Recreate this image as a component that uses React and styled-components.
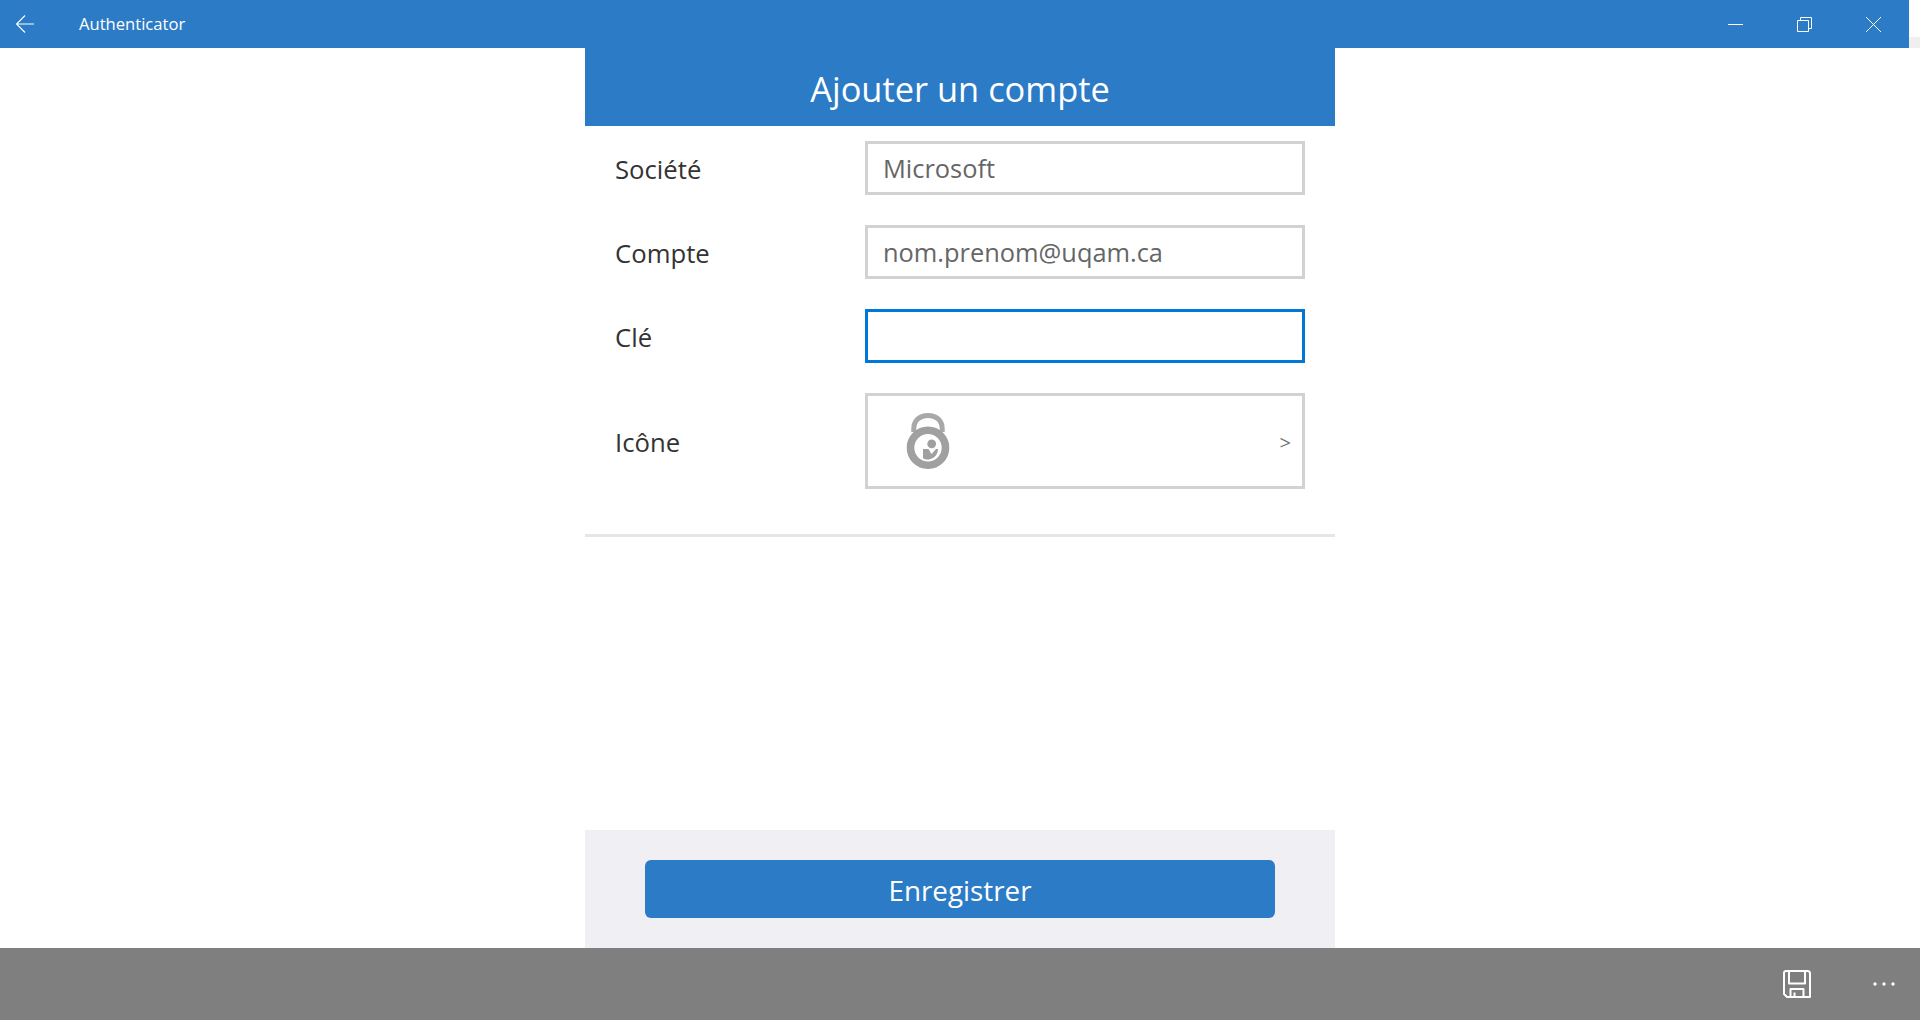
import React from "react";
import styled, { createGlobalStyle } from "styled-components";

const Global = createGlobalStyle`
  html, body { margin: 0; padding: 0; background: #fff; }
  * { box-sizing: border-box; }
  body { font-family: "Open Sans", "Noto Sans", "Liberation Sans", sans-serif; }
`;

const Page = styled.div`
  width: 1920px;
  height: 1020px;
  display: flex;
  flex-direction: column;
  overflow: hidden;
  background: #fff;
`;

const TitleRow = styled.div`
  height: 48px;
  display: flex;
  flex: none;
`;

const TitleBar = styled.header`
  flex: 1;
  display: flex;
  align-items: center;
  padding-right: 1px;
  background: #2b7bc6;
  color: #fff;
`;

const EdgeStrip = styled.div`
  width: 11px;
  background: linear-gradient(#fff 0 37px, #efefef 37px 48px);
`;

const BackButton = styled.button`
  width: 79px;
  height: 48px;
  padding: 0 0 0 16px;
  display: flex;
  align-items: center;
  border: 0;
  background: none;
`;

const AppName = styled.span`
  flex: 1;
  padding-bottom: 1px;
  font-size: 16.6px;
  color: #fff;
`;

const WindowButton = styled.button`
  width: 69px;
  height: 48px;
  padding: 0;
  display: flex;
  align-items: center;
  justify-content: center;
  border: 0;
  background: none;
`;

const Main = styled.main`
  flex: 1;
  min-height: 0;
  display: flex;
  justify-content: center;
`;

const Column = styled.section`
  width: 750px;
  display: flex;
  flex-direction: column;
`;

const Heading = styled.h1`
  margin: 0;
  height: 78px;
  display: flex;
  align-items: center;
  justify-content: center;
  padding-top: 2px;
  background: #2b7bc6;
  color: #fff;
  font-size: 34.4px;
  font-weight: 400;
`;

const Form = styled.div`
  display: flex;
  flex-direction: column;
  gap: 30px;
  padding: 15px 30px 45px;
  border-bottom: 3px solid #e6e6e6;
`;

const Row = styled.div`
  display: grid;
  grid-template-columns: 250px 440px;
  align-items: center;
`;

const Label = styled.label`
  font-size: 25.7px;
  color: #333;
  padding-top: 2px;
`;

const Field = styled.div`
  height: ${(p) => (p.$tall ? "96px" : "54px")};
  display: flex;
  align-items: center;
  justify-content: space-between;
  padding: 0 ${(p) => (p.$tall ? "11px" : "15px")} 0 ${(p) => (p.$tall ? "38px" : "15px")};
  border: 3px solid ${(p) => (p.$focused ? "#0078d7" : "#d2d2d2")};
  background: #fff;
  color: #666;
  font-size: 25.4px;
`;

const Chevron = styled.span`
  padding-top: 3px;
  font-size: 20px;
  color: #777;
`;

const Footer = styled.div`
  margin-top: auto;
  height: 118px;
  padding: 30px 60px;
  background: #efeff4;
`;

const SaveButton = styled.button`
  width: 630px;
  height: 58px;
  padding: 1px 0 0;
  border: 0;
  border-radius: 6px;
  background: #2b7bc6;
  color: #fff;
  font-family: inherit;
  font-size: 27.8px;
  font-weight: 400;
`;

const CommandBar = styled.footer`
  height: 72px;
  flex: none;
  display: flex;
  align-items: center;
  justify-content: flex-end;
  gap: 16px;
  padding-right: 9px;
  background: #7f7f7f;
`;

const CommandButton = styled.button`
  width: 88px;
  height: 72px;
  padding: 0;
  display: flex;
  align-items: center;
  justify-content: center;
  border: 0;
  background: none;
`;

const MoreButton = styled(CommandButton)`
  width: 54px;
`;

const Arrow = () => (
  <svg width="18" height="18" viewBox="0 0 18 18" fill="none" stroke="#fff" strokeWidth="1.1">
    <path d="M0.5 9H18M9 0.5L0.5 9L9 17.5" />
  </svg>
);

const Minimize = () => (
  <svg width="15" height="15" viewBox="0 0 15 15" stroke="#fff" strokeWidth="1">
    <path d="M0 7.5H15" />
  </svg>
);

const Restore = () => (
  <svg width="15" height="15" viewBox="0 0 15 15" fill="none" stroke="#fff" strokeWidth="1">
    <path d="M0.5 3.5H11.5V14.5H0.5Z" />
    <path d="M3.5 3.5V0.5H14.5V11.5H11.5" />
  </svg>
);

const Close = () => (
  <svg width="15" height="15" viewBox="0 0 15 15" stroke="#fff" strokeWidth="1">
    <path d="M0 0L15 15M15 0L0 15" />
  </svg>
);

const LockIcon = () => (
  <svg width="44" height="58" viewBox="0 0 44 58" fill="none">
    <path d="M7.8 20 V16.5 C7.8 8.5 14 3.4 22 3.4 C30 3.4 36.2 8.5 36.2 16.5 V20" stroke="#a8a8a8" strokeWidth="5" />
    <circle cx="22" cy="35.8" r="17.5" stroke="#a0a0a0" strokeWidth="7.6" fill="#fff" />
    <circle cx="25.7" cy="31.8" r="4.4" fill="#a0a0a0" />
    <path d="M17 37H22.5L25.5 42L30 37H32C32 42 29 46 24 47.2C21 47.8 19 47.5 17 46Z" fill="#a0a0a0" />
  </svg>
);

const SaveIcon = () => (
  <svg width="28" height="28" viewBox="0 0 28 28" fill="none" stroke="#fff" strokeWidth="2" strokeLinejoin="round">
    <path d="M1 3.2Q1 1 3.2 1H24.5Q27 1 27 3.5V27H4L1 24Z" />
    <path d="M6 1.5V13.5H22V1.5" />
    <path d="M7.5 27V19H20.5V27" />
    <path d="M11.5 27V22.5" />
  </svg>
);

const MoreIcon = () => (
  <svg width="22" height="4" viewBox="0 0 22 4" fill="#fff">
    <circle cx="2" cy="2" r="1.7" />
    <circle cx="11" cy="2" r="1.7" />
    <circle cx="20" cy="2" r="1.7" />
  </svg>
);

export default function App() {
  return (
    <Page>
      <Global />
      <TitleRow>
        <TitleBar>
          <BackButton aria-label="Retour"><Arrow /></BackButton>
          <AppName>Authenticator</AppName>
          <WindowButton aria-label="Réduire"><Minimize /></WindowButton>
          <WindowButton aria-label="Restaurer"><Restore /></WindowButton>
          <WindowButton aria-label="Fermer"><Close /></WindowButton>
        </TitleBar>
        <EdgeStrip />
      </TitleRow>
      <Main>
        <Column>
          <Heading>Ajouter un compte</Heading>
          <Form>
            <Row>
              <Label>Société</Label>
              <Field>Microsoft</Field>
            </Row>
            <Row>
              <Label>Compte</Label>
              <Field>nom.prenom@uqam.ca</Field>
            </Row>
            <Row>
              <Label>Clé</Label>
              <Field $focused />
            </Row>
            <Row>
              <Label>Icône</Label>
              <Field $tall>
                <LockIcon />
                <Chevron>&gt;</Chevron>
              </Field>
            </Row>
          </Form>
          <Footer>
            <SaveButton>Enregistrer</SaveButton>
          </Footer>
        </Column>
      </Main>
      <CommandBar>
        <CommandButton aria-label="Enregistrer"><SaveIcon /></CommandButton>
        <MoreButton aria-label="Plus"><MoreIcon /></MoreButton>
      </CommandBar>
    </Page>
  );
}
